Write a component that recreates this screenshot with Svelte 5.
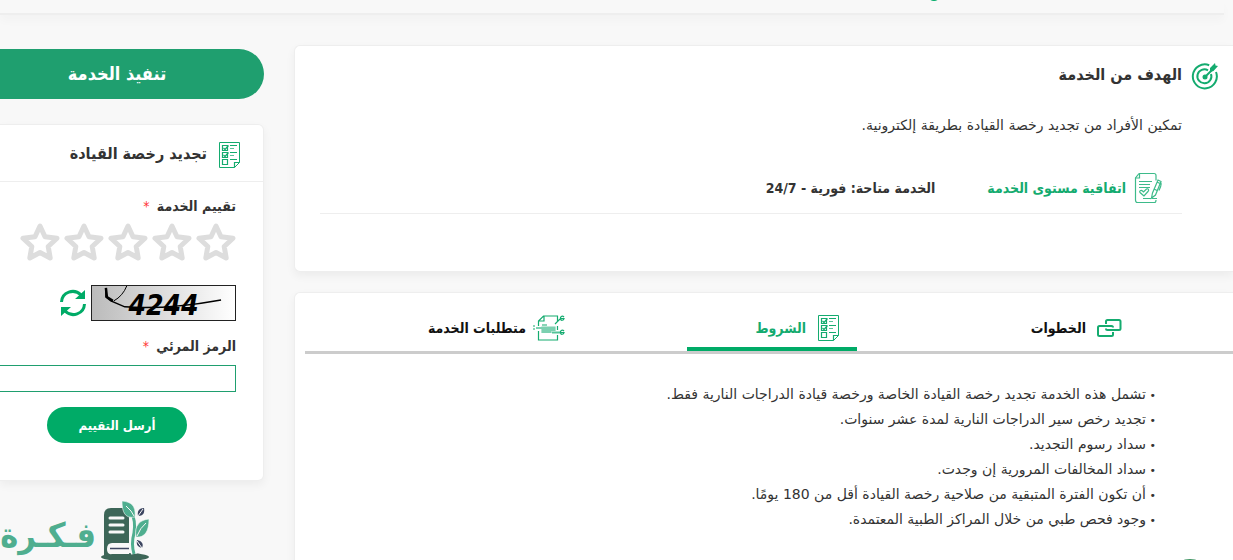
<script lang="ts">
  const tabs = [
    { id: "steps", label: "الخطوات" },
    { id: "conditions", label: "الشروط" },
    { id: "requirements", label: "متطلبات الخدمة" },
  ];

  const conditions = [
    "تشمل هذه الخدمة تجديد رخصة القيادة الخاصة ورخصة قيادة الدراجات النارية فقط.",
    "تجديد رخص سير الدراجات النارية لمدة عشر سنوات.",
    "سداد رسوم التجديد.",
    "سداد المخالفات المرورية إن وجدت.",
    "أن تكون الفترة المتبقية من صلاحية رخصة القيادة أقل من 180 يومًا.",
    "وجود فحص طبي من خلال المراكز الطبية المعتمدة.",
  ];

  let active = $state("conditions");
  let rating = $state(0);
  let code = $state("");
</script>

{#snippet checklist()}
  <svg width="22" height="28" viewBox="0 0 22 28" fill="none" stroke="#14ab6f" stroke-width="1">
    <path d="M.5 1.5h20v20l-5 5h-15z" />
    <path d="M15.500 26.500v-5h5" stroke-width="1.200" />
    <path d="M3.500 4.500h5v5h-5zM3.500 11.500h5v5h-5zM3.500 18.500h5v5h-5z" stroke-width="1.200" />
    <path d="M4.500 7l1.500 1.500 3.500-4M4.500 14l1.500 1.500 3.500-4" stroke-width="1.200" />
    <path d="M11 4.500h7M11 11.500h7M11 18.500h7" />
    <path d="M11 7.500h4M11 14.500h4" opacity=".7" />
  </svg>
{/snippet}

<div class="page" dir="rtl">
  <header><span class="dot"></span></header>

  <div class="columns">
    <main>
      <section class="card goal">
        <h2>
          <svg width="28" height="28" viewBox="0 0 28 28" fill="none" stroke="#14ab6f">
            <path d="M18.200 3.200A12 12 0 1 0 25 10" stroke-width="2" />
            <path d="M17 8.300A7 7 0 1 0 20 12" stroke-width="2" />
            <circle cx="14" cy="15" r="2.500" fill="#14ab6f" stroke="none" />
            <path d="M14 15l7-7" stroke-width="2" />
            <path d="M19 10V6l5-5 .5 2.500 2.500.5-4.500 5z" fill="#14ab6f" stroke="none" />
          </svg>
          <span>الهدف من الخدمة</span>
        </h2>
        <p>تمكين الأفراد من تجديد رخصة القيادة بطريقة إلكترونية.</p>
        <div class="agreement">
          <a href="#sla">
            <svg width="28" height="32" viewBox="0 0 28 32" fill="none" stroke="#3dbb8a" stroke-width="1.200">
              <path d="M5 1.500h15c1.500 0 2 1 2 2v5M5 1.500L1.500 6v22c0 2 .5 2.500 2 2.500h17c1.500 0 1.500-1 1.500-2.500" />
              <path d="M5.500 1.500V6h-4M9 26.500h8M5 9.500h13M5 12.500h11M5 15.500h11M18 26.500h5" />
              <path d="M10 24l-4-3.500c-1-1.500 1-3 2.500-1.500l1 1 3-3c1.500-1 3 1 1.500 2.500z" />
              <path d="M17.500 26l1-5L24 8l3 1.500-5.500 13.500zM23 10l3 1.500M20 17l3 1.500M26.500 10.500c1.500 1 0 5-1.500 8" />
            </svg>
            اتفاقية مستوى الخدمة
          </a>
          <span>الخدمة متاحة: فورية - 24/7</span>
        </div>
      </section>

      <section class="card details">
        <div class="tabs" role="tablist">
          {#each tabs as tab}
            <button role="tab" aria-selected={active === tab.id} class:active={active === tab.id} onclick={() => (active = tab.id)}>
              <span class="icon">
                {#if tab.id === "steps"}
                  <svg width="26" height="20" viewBox="0 0 26 20" fill="none" stroke="#14ab6f" stroke-width="2">
                    <path d="M10 6V3.500Q10 2 11.500 2H23q1.500 0 1.500 1.500v7Q24.500 12 23 12H11.500Q10 12 10 10.500" />
                    <path d="M17 14v2.500q0 1.500-1.500 1.500h-12Q2 18 2 16.500v-7Q2 8 3.500 8h12q1.500 0 1.500 1.500" />
                  </svg>
                {:else if tab.id === "conditions"}
                  {@render checklist()}
                {:else}
                  <svg width="32" height="28" viewBox="0 0 32 28" fill="none" stroke="#14ab6f" stroke-width="1.200">
                    <path d="M5.500 12V7l5-5h14v5M24.500 12v4M5.500 17v9h19v-5M6 7h5V2" />
                    <path d="M22 10l5-5M9 11h5M0 12h2M0 15h2" />
                    <path d="M3 14h6" stroke="#7cd0b0" stroke-width="2" />
                    <path d="M9 13h13v3.500H9zM9 17h9v1.500H9z" fill="#7cd0b0" stroke="#7cd0b0" />
                    <path d="M19 18.500h8" stroke="#55c499" stroke-width="2" />
                    <path d="M31 3c-2-2-4 0-3.500 2s3 1.500 3.500-.5h-3M31 17c-2-2-4 0-3.500 2s3 1.500 3.500-.5h-3" />
                  </svg>
                {/if}
              </span>
              {tab.label}
            </button>
          {/each}
        </div>
        <ul>
          {#each conditions as item}
            <li>{item}</li>
          {/each}
        </ul>
      </section>
    </main>

    <aside>
      <button class="start">تنفيذ الخدمة</button>

      <form class="card rate" onsubmit={(e) => e.preventDefault()}>
        <h3>{@render checklist()} <span>تجديد رخصة القيادة</span></h3>
        <div class="fields">
          <div class="label">تقييم الخدمة <em>*</em></div>
          <div class="stars">
            {#each [1, 2, 3, 4, 5] as n}
              <button type="button" aria-label="{n} / 5" class:on={n <= rating} onclick={() => (rating = n)}>
                <svg width="40" height="38" viewBox="0 0 40 38" fill="none" stroke="currentColor" stroke-width="5" stroke-linejoin="round">
                  <path d="M20 3l5 10.700 12 1.500-8.800 8.300 2 11.500L20 29.500 9.800 35l2-11.500-8.800-8.300L15 13.700z" />
                </svg>
              </button>
            {/each}
          </div>
          <div class="captcha">
            <div class="code">
              <b>4244</b>
              <svg viewBox="0 0 144 34" fill="none" stroke="#000">
                <path d="M14 2v9l5 4 14 6q42 3 97-7" stroke-width="1.500" />
                <path d="M14 2l1 9 6 4" stroke-width="2.500" />
                <path d="M22 15q9-5 13-15" />
              </svg>
            </div>
            <button type="button" class="refresh" aria-label="تحديث">
              <svg width="28" height="28" viewBox="0 0 28 28" fill="none" stroke="#00ab67" stroke-width="3">
                <path d="M2.500 13C3 3 15-1 22 6M25.500 15C25 25 13 29 6 22" />
                <path d="M26 1v9H16zM2 27v-9h10z" fill="#00ab67" stroke="none" />
              </svg>
            </button>
          </div>
          <label class="label" for="code">الرمز المرئي <em>*</em></label>
          <input id="code" type="text" bind:value={code} />
          <button class="send">أرسل التقييم</button>
        </div>
      </form>

      <div class="brand">
        <svg width="50" height="60" viewBox="0 0 50 60">
          <ellipse cx="25" cy="56" rx="24" ry="4" fill="#3d6658" />
          <path d="M4 54V14q0-7 7-7h18v42q0 5-5 5z" fill="#3d6658" />
          <path d="M29 42H12q-5 0-5 6t5 5h17z" fill="#f8f8f8" />
          <path d="M10 47.500h19" stroke="#3c4560" stroke-width="1.500" />
          <path d="M10 17h13M10 24h13M10 31h13" stroke="#f8f8f8" stroke-width="3" stroke-linecap="round" />
          <path d="M34 53q-2-10 1-21 2-12-2-18" stroke="#f8f8f8" stroke-width="6" fill="none" />
          <path d="M34 53q-3-10 0-21 2-13-3-21" stroke="#4fae8f" stroke-width="3" fill="none" />
          <path d="M22 0c9 1 14 4 13 16-10 2-13-5-13-16zM49 18c-9 1-15 6-13 18 9 1 13-6 13-18z" fill="#4fae8f" stroke="#f8f8f8" stroke-width=".6" />
          <path d="M26 5q6 5 8 10M46 22q-6 5-9 13" stroke="#f8f8f8" fill="none" />
          <path d="M44 7c-5 0-7 3-6 8 5 0 7-3 6-8zM37 39c5 1 7 4 5 8-4-1-6-3-5-8z" fill="#3c4560" />
          <path d="M43 8l-5 7M37 40l5 7" stroke="#f8f8f8" fill="none" />
        </svg>
        <span>فـكـرة</span>
      </div>
    </aside>
  </div>

  <button class="float" aria-label="المساعدة"></button>
</div>

<style>
  :global(body) {
    background: #f8f8f8;
    height: 100vh;
    overflow: hidden;
  }

  .page {
    --strong: "DejaVu Sans Condensed", "DejaVu Sans", sans-serif;
    font-family: "DejaVu Sans", "Noto Sans", sans-serif;
    font-size: 14px;
    color: #333;
  }

  h2, h3, p, ul {
    margin: 0;
    padding: 0;
  }

  button {
    background: none;
    border: none;
    padding: 0;
    font: inherit;
    color: inherit;
    cursor: pointer;
  }

  svg {
    display: block;
    flex: none;
  }

  header {
    height: 13px;
    margin-right: 9px;
    border-bottom: 2px solid #eee;
    box-shadow: 0 6px 10px #00000006;
    position: relative;
  }

  .dot {
    position: absolute;
    top: -6px;
    right: 285px;
    width: 10px;
    height: 7px;
    border-radius: 50%;
    background: #00ab67;
  }

  .columns {
    display: flex;
    gap: 30px;
    padding-top: 30px;
  }

  main {
    flex: 1;
    min-width: 0;
  }

  .card {
    background: #fff;
    border: 1px solid #eee;
    border-radius: 6px;
    box-shadow: 0 4px 10px #0000000d;
  }

  main .card {
    border-right: none;
    border-radius: 6px 0 0 6px;
  }

  .goal {
    padding: 14px 14px 57px 25px;
  }

  h2, h3 {
    display: flex;
    align-items: center;
    font-family: var(--strong);
    font-size: 16px;
    font-weight: bold;
  }

  h2 {
    gap: 9px;
    height: 32px;
  }

  h2 span, h3 span {
    padding-bottom: 4px;
  }

  .goal p {
    padding: 21px 37px 0 0;
    line-height: 24px;
  }

  .agreement {
    display: flex;
    align-items: center;
    gap: 52px;
    margin: 35px 37px 0 0;
    padding: 0 20px 9px 0;
    border-bottom: 1px solid #eee;
    font-family: var(--strong);
    font-weight: bold;
  }

  .agreement a {
    display: flex;
    align-items: center;
    gap: 8px;
    color: #14ab6f;
    text-decoration: none;
  }

  .details {
    margin-top: 20px;
    padding: 0 0 40px 10px;
  }

  .tabs {
    display: flex;
    gap: 110px;
    padding: 15px 96px 0 0;
    border-bottom: 3px solid #ccc;
    color: #111;
  }

  .tabs button {
    display: flex;
    align-items: center;
    gap: 7px;
    width: 170px;
    height: 43px;
    padding-right: 12px;
    border-bottom: 4px solid transparent;
    font-family: var(--strong);
    font-weight: bold;
    white-space: nowrap;
  }

  .tabs .active {
    color: #14ab6f;
    border-color: #00ab67;
  }

  .icon {
    display: flex;
    justify-content: center;
    width: 32px;
  }

  ul {
    list-style: none;
    padding: 28px 77px 0 0;
    line-height: 25px;
  }

  li::before {
    content: "• ";
    font-size: 11px;
    line-height: 10px;
  }

  aside {
    width: 264px;
  }

  .start {
    display: block;
    width: 100%;
    height: 50px;
    margin-top: 4px;
    padding: 0 30px 2px 0;
    border-radius: 0 25px 25px 0;
    background: #1f9f6f;
    color: #fff;
    font-family: var(--strong);
    font-size: 18px;
    font-weight: bold;
  }

  .rate {
    margin-top: 25px;
    border-left: none;
    border-radius: 0 6px 6px 0;
  }

  h3 {
    gap: 12px;
    height: 57px;
    padding: 4px 22px 0 0;
    box-sizing: border-box;
    border-bottom: 1px solid #eee;
  }

  .fields {
    padding: 11px 27px 37px 0;
  }

  .label {
    display: block;
    font-family: var(--strong);
    font-weight: bold;
    line-height: 26px;
  }

  em {
    margin-right: 3px;
    color: #f33;
    font-style: normal;
    font-weight: normal;
  }

  .stars {
    display: flex;
    gap: 4px;
    padding-top: 4px;
    color: #ddd;
  }

  .stars .on {
    color: #00ab67;
  }

  .captcha {
    display: flex;
    align-items: center;
    gap: 4px;
    padding: 24px 0 12px;
  }

  .code {
    position: relative;
    width: 143px;
    height: 34px;
    border: 1px solid #222;
    background: linear-gradient(to right, #bbb, #fff);
    text-align: center;
    line-height: 40px;
    color: #000;
    font-family: var(--strong);
    font-size: 28px;
    font-style: italic;
  }

  .code svg {
    position: absolute;
    inset: 0;
  }

  input {
    display: block;
    box-sizing: border-box;
    width: 100%;
    height: 27px;
    margin-top: 6px;
    border: 1px solid #1f9f6f;
    border-left: none;
    background: #fff;
    font: inherit;
  }

  .send {
    display: block;
    width: 140px;
    height: 36px;
    margin: 15px 49px 0 0;
    border-radius: 18px;
    background: #00ab67;
    color: #fff;
    font-family: var(--strong);
    font-size: 13px;
    font-weight: bold;
  }

  .brand {
    display: flex;
    align-items: center;
    gap: 4px;
    padding: 20px 114px 0 0;
    color: #4fae8f;
    font-family: var(--strong);
    font-size: 34px;
    font-weight: bold;
    line-height: 52px;
  }

  .brand span {
    padding-top: 8px;
  }

  .float {
    position: fixed;
    right: 18px;
    bottom: -49px;
    width: 50px;
    height: 50px;
    border-radius: 50%;
    background: #3f9463;
  }
</style>
